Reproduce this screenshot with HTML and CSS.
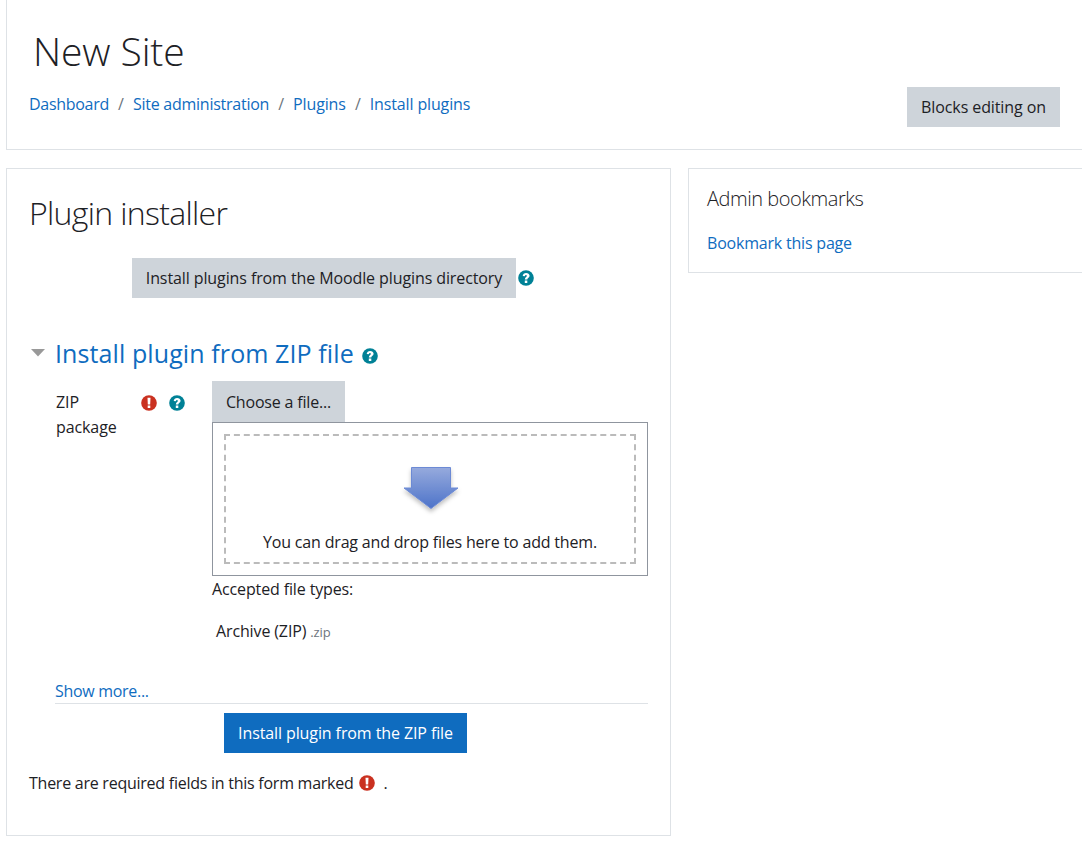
FILE: index.html
```html
<!DOCTYPE html>
<html lang="en">
<head>
<meta charset="utf-8">
<title>New Site: Plugin installer</title>
<link rel="stylesheet" href="styles.css">
</head>
<body>
<svg class="sprite" width="0" height="0">
  <symbol id="help" viewBox="0 0 16 16">
    <circle cx="8" cy="8" r="7.8" fill="#008196"/>
    <path d="M4.700 6.100C4.900 3.900 6.300 2.900 8.100 2.900c1.900 0 3.500 1 3.500 2.900 0 2.100-2.300 2.200-2.300 3.600H6.800c0-2.300 2-2.400 2-3.500 0-.5-.3-.8-.8-.8-.6 0-1 .4-1.200 1.200zM6.800 10.400h2.500v2.500H6.800z" fill="#fff"/>
  </symbol>
  <symbol id="required" viewBox="0 0 16 16">
    <circle cx="8" cy="8" r="7.8" fill="#ca3120"/>
    <path d="M6.500 2.700h3L9.200 9.400H6.800zM6.700 10.500h2.600v2.600H6.700z" fill="#fff"/>
  </symbol>
</svg>
<header class="page-header">
  <div>
    <h1 class="site-name">New Site</h1>
    <nav class="breadcrumb">
      <a class="crumb crumb-dashboard">Dashboard</a><span class="sep">/</span><a class="crumb crumb-admin">Site administration</a><span class="sep">/</span><a class="crumb crumb-plugins">Plugins</a><span class="sep">/</span><a class="crumb crumb-install">Install plugins</a>
    </nav>
  </div>
  <button class="btn btn-editing">Blocks editing on</button>
</header>
<div class="columns">
  <main class="card installer">
    <h2 class="title">Plugin installer</h2>
    <div class="directory-row">
      <button class="btn btn-directory">Install plugins from the Moodle plugins directory</button>
      <svg class="icon"><use href="#help"/></svg>
    </div>
    <h3 class="section-title">
      <svg class="caret" viewBox="0 0 14 8"><path d="M0 0h14L7 7.5z" fill="#999"/></svg>
      <a class="section-link">Install plugin from ZIP file</a>
      <svg class="icon"><use href="#help"/></svg>
    </h3>
    <div class="field">
      <div class="field-label">
        <label>ZIP package</label>
        <span class="field-icons">
          <svg class="icon"><use href="#required"/></svg>
          <svg class="icon"><use href="#help"/></svg>
        </span>
      </div>
      <div class="field-body">
        <button class="btn btn-choose">Choose a file...</button>
        <div class="dropzone">
          <div class="dropzone-inner">
            <svg class="arrow" viewBox="0 0 64 60">
              <defs>
                <linearGradient id="arrow-fill" x1="0" y1="0" x2="0" y2="1">
                  <stop offset="0" stop-color="#96aadd"/>
                  <stop offset="1" stop-color="#4d73c9"/>
                </linearGradient>
                <filter id="arrow-shadow" x="-20%" y="-20%" width="140%" height="150%">
                  <feDropShadow dx="0" dy="3" stdDeviation="2.2" flood-color="#000" flood-opacity=".25"/>
                </filter>
              </defs>
              <path d="M13.500 6.500h39v20.500h7.500L33 47.500 6 27h7.500z" fill="url(#arrow-fill)" stroke="#6c8ad5" filter="url(#arrow-shadow)"/>
            </svg>
            <span class="drop-text">You can drag and drop files here to add them.</span>
          </div>
        </div>
        <p class="accepted">Accepted file types:</p>
        <p class="filetype"><span class="type-name">Archive (ZIP)</span><small>.zip</small></p>
      </div>
    </div>
    <div class="more"><a>Show more...</a></div>
    <button class="btn btn-primary">Install plugin from the ZIP file</button>
    <p class="note"><span class="note-text">There are required fields in this form marked</span><svg class="icon"><use href="#required"/></svg><span>.</span></p>
  </main>
  <aside class="card bookmarks">
    <h5 class="bookmarks-title">Admin bookmarks</h5>
    <a class="bookmark-link">Bookmark this page</a>
  </aside>
</div>
</body>
</html>
```

FILE: styles.css
```css
* { box-sizing: border-box; }
body {
  margin: 0;
  width: 1082px;
  height: 843px;
  overflow: hidden;
  background: #fff;
  color: #1d2125;
  font: 400 16px/25px "Open Sans", "Noto Sans", sans-serif;
  letter-spacing: -0.3px;
  white-space: nowrap;
}
h1, h2, h3, h5, p { margin: 0; font-weight: 300; }
p { font-weight: 400; }
a { color: #0f6cbf; }
.sprite { display: none; }
.icon { width: 16px; height: 16px; flex: none; display: block; }
.btn {
  display: block;
  height: 40px;
  padding: 0;
  border: 0;
  background: #ced4da;
  color: #1d2125;
  font: inherit;
  letter-spacing: -0.1px;
  text-align: center;
}
.page-header {
  display: flex;
  justify-content: space-between;
  height: 150px;
  margin-left: 6px;
  padding: 24px 22px 0;
  border: solid #dee2e6;
  border-width: 0 0 1px 1px;
}
.site-name { padding-left: 4px; font-size: 39px; line-height: 54px; letter-spacing: -0.1px; }
.breadcrumb { display: flex; margin-top: 14px; }
.crumb-admin { letter-spacing: -0.25px; }
.crumb-plugins, .crumb-install { letter-spacing: -0.14px; }
.sep { width: 24px; text-align: center; color: #6c757d; }
.btn-editing { width: 153px; margin-top: 63px; }
.columns { display: flex; align-items: flex-start; gap: 17px; margin: 18px 0 0 6px; }
.card { border: 1px solid #dee2e6; }
.installer { width: 665px; height: 668px; padding: 21px 22px 22px; }
.title { font-size: 32px; line-height: 45px; letter-spacing: -0.68px; }
.directory-row { display: flex; align-items: center; gap: 2px; margin: 23px 0 0 103px; }
.btn-directory { width: 384px; }
.section-title { display: flex; align-items: center; height: 36px; margin-top: 37px; font-weight: 400; }
.caret { width: 14px; height: 8px; margin: 0 10px 0 2px; }
.section-link { font-size: 25px; line-height: 36px; letter-spacing: 0.1px; }
.section-title .icon { margin: 5px 0 0 8px; }
.field { display: flex; margin: 10px 0 0 26px; }
.field-label { display: flex; width: 157px; padding: 9px 0 0 1px; white-space: normal; letter-spacing: -0.1px; }
.field-label label { width: 85px; }
.field-icons { display: flex; gap: 12px; padding-top: 5px; }
.field-body { width: 436px; }
.btn-choose { width: 133px; height: 41px; padding-top: 1px; letter-spacing: -0.18px; }
.dropzone { height: 154px; padding: 11px; border: 1px solid #8f959e; }
.dropzone-inner {
  display: flex;
  flex-direction: column;
  align-items: center;
  height: 130px;
  padding-top: 25px;
  border: 2px dashed #bbb;
}
.arrow { width: 64px; height: 60px; flex: none; }
.drop-text { margin-top: 9px; letter-spacing: -0.18px; }
.accepted { margin-top: 1px; letter-spacing: -0.13px; }
.filetype { display: flex; gap: 4px; margin: 17px 0 0 4px; letter-spacing: -0.13px; }
.filetype small { padding-top: 1px; color: #6c757d; font-size: 13px; }
.more { height: 25px; margin: 34px 0 0 26px; border-bottom: 1px solid #dee2e6; }
.btn-primary { width: 243px; margin: 9px 0 0 195px; background: #0f6cbf; color: #fff; }
.note { display: flex; align-items: center; margin-top: 18px; }
.note-text { letter-spacing: -0.25px; }
.note .icon { margin: -1px 9px 0 5px; }
.bookmarks { width: 420px; height: 105px; flex: none; padding: 17px 18px; }
.bookmarks-title { margin-bottom: 19px; font-size: 20px; line-height: 26px; letter-spacing: -0.46px; }
.bookmark-link { display: block; letter-spacing: -0.2px; }
```
